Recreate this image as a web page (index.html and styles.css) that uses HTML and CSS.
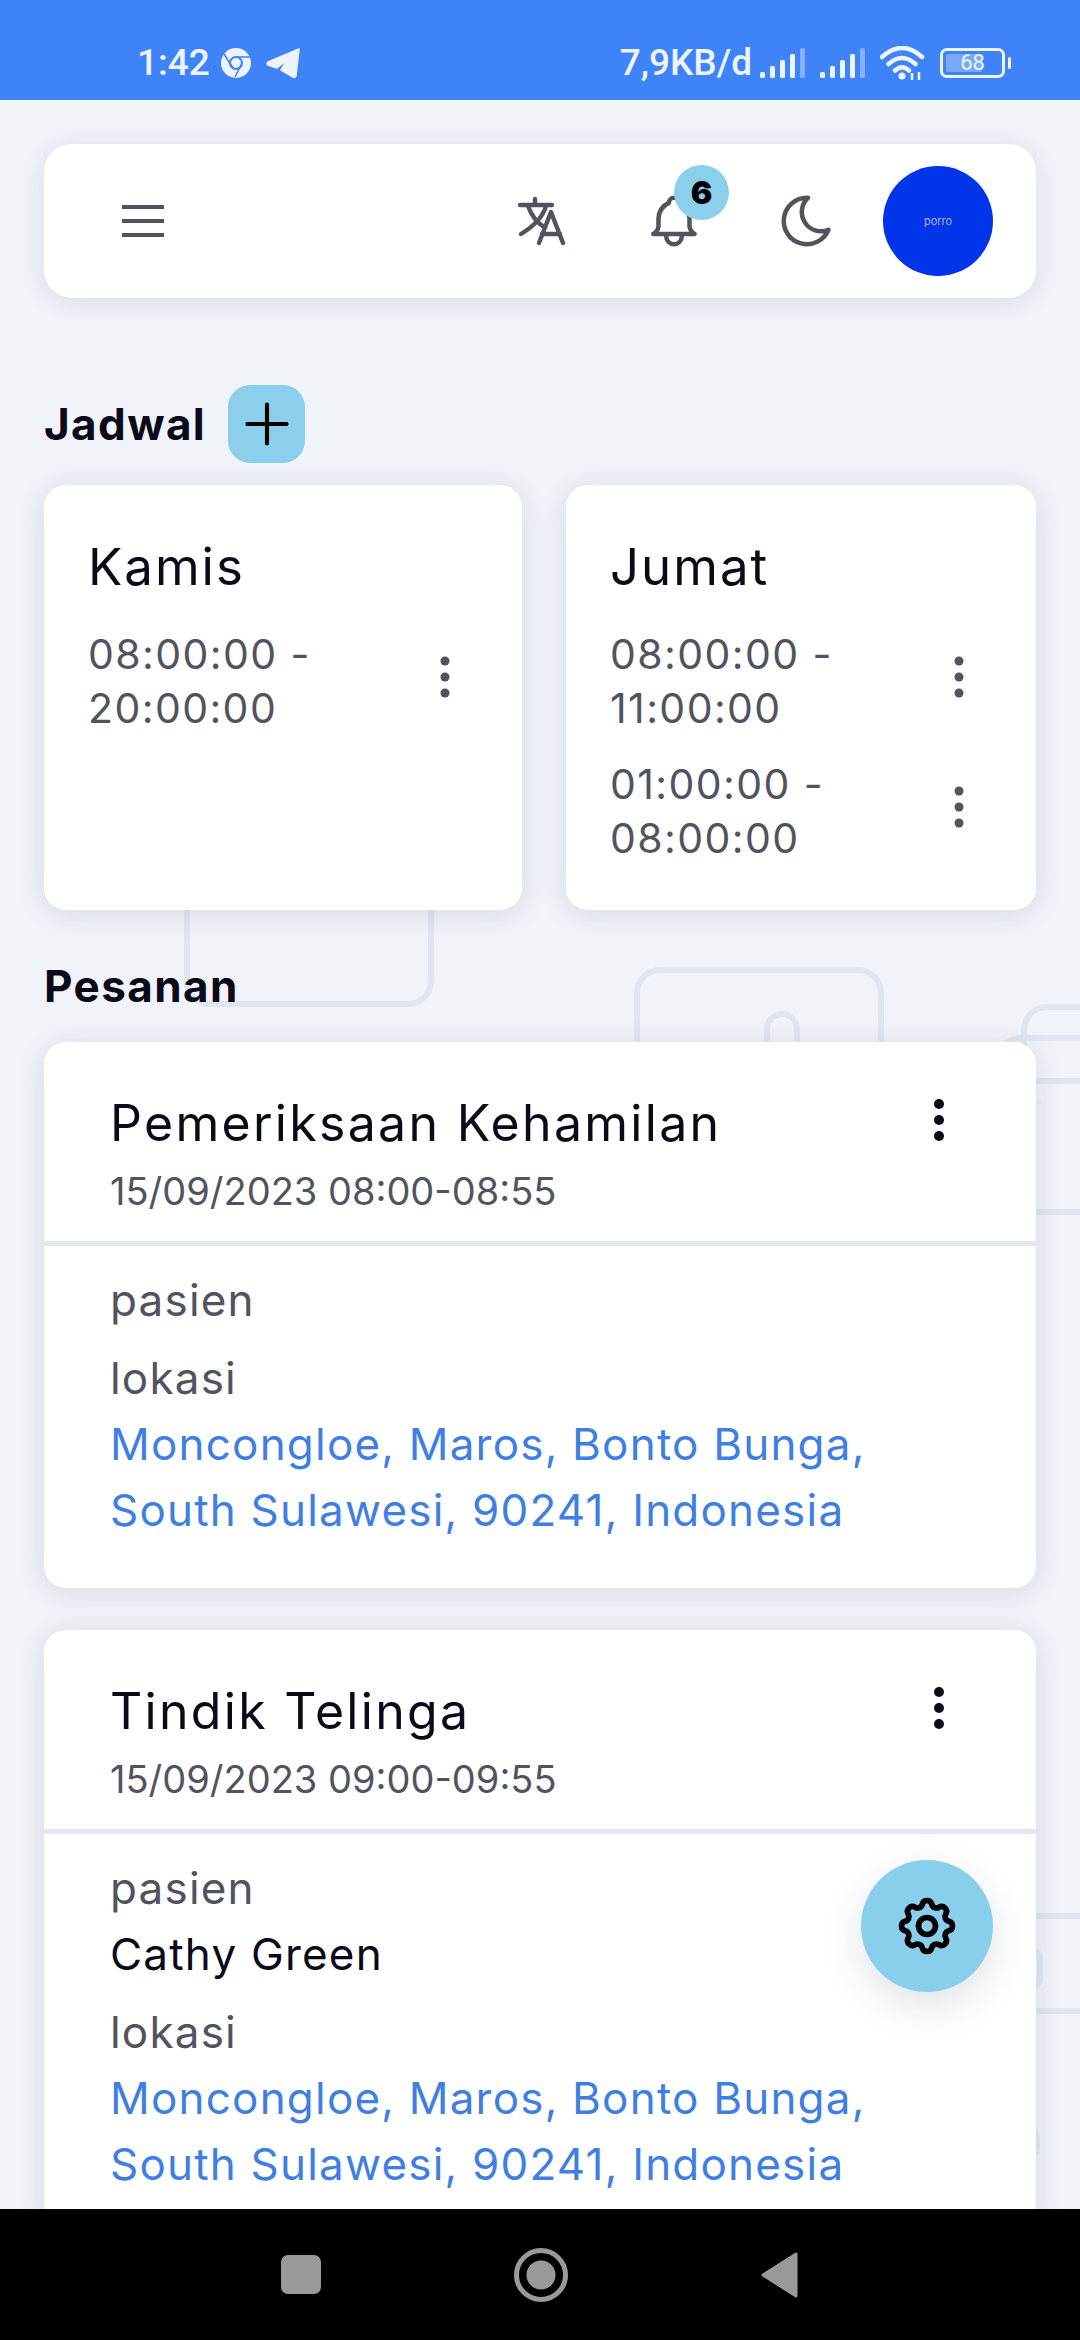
FILE: index.html
```html
<!DOCTYPE html>
<html lang="en">
  <head>
    <meta charset="UTF-8">
    <meta name="viewport" content="width=device-width, initial-scale=1.0">
    <title>Jadwal</title>
    <link rel="stylesheet" href="styles.css">
  </head>
  <body>
    <header class="status-bar">
      <div class="status-left">
        <span class="status-time">1:42</span>
        <svg class="status-icon" viewBox="0 0 30 30" width="30" height="30" aria-hidden="true">
          <circle cx="15" cy="15" r="15" fill="#eef4ff"/>
          <circle cx="15" cy="15" r="6" fill="none" stroke="#3f83f8" stroke-width="2"/>
          <path d="M3 6l9 14M15 9h14M21 15l-7 14" fill="none" stroke="#3f83f8" stroke-width="1.6"/>
        </svg>
        <svg class="status-icon plane" viewBox="0 0 35 30" width="35" height="30" aria-hidden="true">
          <path d="M33 1L2 14q-2 2 0 3l9 3 10-8-6 10 12 7q2 1 3-1z" fill="#eef4ff" stroke="#eef4ff" stroke-width="1.5" stroke-linejoin="round"/>
        </svg>
      </div>
      <div class="status-right">
        <span class="status-speed">7,9KB/d</span>
        <svg class="signal" viewBox="0 0 46 30" width="46" height="30" aria-hidden="true">
          <rect x="0" y="24" width="5" height="6" rx="1.5" fill="#eef4ff"/>
          <rect x="10" y="18" width="5" height="12" rx="1.5" fill="#eef4ff"/>
          <rect x="20" y="12" width="5" height="18" rx="1.5" fill="#eef4ff"/>
          <rect x="30" y="6" width="5" height="24" rx="1.5" fill="#eef4ff"/>
          <rect x="40" y="0" width="5" height="30" rx="1.5" fill="#85b0fa"/>
        </svg>
        <svg class="signal" viewBox="0 0 46 30" width="46" height="30" aria-hidden="true">
          <rect x="0" y="24" width="5" height="6" rx="1.5" fill="#eef4ff"/>
          <rect x="10" y="18" width="5" height="12" rx="1.5" fill="#eef4ff"/>
          <rect x="20" y="12" width="5" height="18" rx="1.5" fill="#eef4ff"/>
          <rect x="30" y="6" width="5" height="24" rx="1.5" fill="#eef4ff"/>
          <rect x="40" y="0" width="5" height="30" rx="1.5" fill="#85b0fa"/>
        </svg>
        <svg class="wifi" viewBox="0 0 46 34" width="46" height="34" aria-hidden="true">
          <path d="M2 11Q22-7 42 11M8.5 18Q22 6 35.5 18M15 24.5Q22 18 29 24.5" fill="none" stroke="#eef4ff" stroke-width="4.5" stroke-linecap="round"/>
          <circle cx="22" cy="30" r="3.5" fill="#eef4ff"/>
          <path d="M32 27v7M39 26v8" stroke="#eef4ff" stroke-width="2.5"/>
        </svg>
        <div class="battery">
          <div class="battery-body">
            <span class="battery-fill"></span>
            <span class="battery-text">68</span>
          </div>
          <span class="battery-nub"></span>
        </div>
      </div>
    </header>

    <main class="page">
      <div class="backdrop">
        <span class="shape shape-a"></span>
        <span class="shape shape-b"></span>
        <span class="shape shape-key"></span>
        <span class="shape shape-c"></span>
        <span class="shape shape-d"></span>
        <span class="shape shape-g"></span>
        <span class="shape shape-e"></span>
        <span class="shape shape-h"></span>
        <span class="shape shape-f"></span>
      </div>

      <nav class="topbar">
        <svg class="menu-icon" viewBox="0 0 42 32" aria-hidden="true"><path d="M0 2h42M0 16h42M0 30h42"/></svg>
        <div class="topbar-actions">
          <svg class="icon translate-icon" viewBox="-8 -7 62 62" aria-hidden="true"><path d="M2 8h32M17 2v6M10 9q5 14 16 21M28 9q-4 15-25 28M21 46l12-31 12 31M24 37h18"/></svg>
          <div class="bell">
            <svg class="icon" viewBox="0 0 24 24" aria-hidden="true"><path d="M10 5a2 2 0 1 1 4 0a7 7 0 0 1 4 6v3a4 4 0 0 0 2 3h-16a4 4 0 0 0 2-3v-3a7 7 0 0 1 4-6M9 17v1a3 3 0 0 0 6 0v-1"/></svg>
            <span class="badge">6</span>
          </div>
          <svg class="icon" viewBox="0 0 24 24" aria-hidden="true"><path d="M12 3c.132 0 .263 0 .393 0a7.5 7.5 0 0 0 7.920 12.446a9 9 0 1 1-8.313-12.454z"/></svg>
          <div class="avatar">porro</div>
        </div>
      </nav>

      <section class="schedule">
        <div class="section-head">
          <h2 class="section-title">Jadwal</h2>
          <button class="add-btn" aria-label="Tambah">
            <svg viewBox="0 0 24 24" width="52" height="52" aria-hidden="true"><path d="M12 3v18M3 12h18"/></svg>
          </button>
        </div>
        <div class="day-grid">
          <article class="day-card">
            <h3 class="day-name">Kamis</h3>
            <div class="slot">
              <p class="slot-time">08:00:00 - 20:00:00</p>
              <svg class="dots" viewBox="0 0 10 42" aria-hidden="true"><circle cx="5" cy="5" r="4.5"/><circle cx="5" cy="21" r="4.5"/><circle cx="5" cy="37" r="4.5"/></svg>
            </div>
          </article>
          <article class="day-card">
            <h3 class="day-name">Jumat</h3>
            <div class="slot">
              <p class="slot-time">08:00:00 - 11:00:00</p>
              <svg class="dots" viewBox="0 0 10 42" aria-hidden="true"><circle cx="5" cy="5" r="4.5"/><circle cx="5" cy="21" r="4.5"/><circle cx="5" cy="37" r="4.5"/></svg>
            </div>
            <div class="slot">
              <p class="slot-time">01:00:00 - 08:00:00</p>
              <svg class="dots" viewBox="0 0 10 42" aria-hidden="true"><circle cx="5" cy="5" r="4.5"/><circle cx="5" cy="21" r="4.5"/><circle cx="5" cy="37" r="4.5"/></svg>
            </div>
          </article>
        </div>
      </section>

      <section class="orders">
        <h2 class="section-title orders-title">Pesanan</h2>

        <article class="order-card">
          <div class="order-head">
            <div>
              <h3 class="order-title">Pemeriksaan Kehamilan</h3>
              <p class="order-date">15/09/2023 08:00-08:55</p>
            </div>
            <svg class="dots dots-dark" viewBox="0 0 10 42" aria-hidden="true"><circle cx="5" cy="5" r="5"/><circle cx="5" cy="21" r="5"/><circle cx="5" cy="37" r="5"/></svg>
          </div>
          <div class="order-body">
            <p class="label">pasien</p>
            <p class="label">lokasi</p>
            <p class="address">Moncongloe, Maros, Bonto Bunga, South Sulawesi, 90241, Indonesia</p>
          </div>
        </article>

        <article class="order-card">
          <div class="order-head">
            <div>
              <h3 class="order-title">Tindik Telinga</h3>
              <p class="order-date">15/09/2023 09:00-09:55</p>
            </div>
            <svg class="dots dots-dark" viewBox="0 0 10 42" aria-hidden="true"><circle cx="5" cy="5" r="5"/><circle cx="5" cy="21" r="5"/><circle cx="5" cy="37" r="5"/></svg>
          </div>
          <div class="order-body">
            <p class="label">pasien</p>
            <p class="value">Cathy Green</p>
            <p class="label">lokasi</p>
            <p class="address">Moncongloe, Maros, Bonto Bunga, South Sulawesi, 90241, Indonesia</p>
          </div>
        </article>
      </section>

      <button class="fab" aria-label="Pengaturan">
        <svg viewBox="0 0 24 24" width="68" height="68" aria-hidden="true"><path d="M10.325 4.317c.426-1.756 2.924-1.756 3.350 0a1.724 1.724 0 0 0 2.573 1.066c1.543-.940 3.310.826 2.370 2.370a1.724 1.724 0 0 0 1.065 2.572c1.756.426 1.756 2.924 0 3.350a1.724 1.724 0 0 0-1.066 2.573c.940 1.543-.826 3.310-2.370 2.370a1.724 1.724 0 0 0-2.572 1.065c-.426 1.756-2.924 1.756-3.350 0a1.724 1.724 0 0 0-2.573-1.066c-1.543.940-3.310-.826-2.370-2.370a1.724 1.724 0 0 0-1.065-2.572c-1.756-.426-1.756-2.924 0-3.350a1.724 1.724 0 0 0 1.066-2.573c-.940-1.543.826-3.310 2.370-2.370c1 .608 2.296.070 2.572-1.065z"/><circle cx="12" cy="12" r="3"/></svg>
      </button>
    </main>

    <footer class="nav-bar">
      <span class="nav-square"></span>
      <span class="nav-circle"></span>
      <svg class="nav-back" viewBox="0 0 38 46" width="38" height="46" aria-hidden="true"><path d="M35 2L2 23l33 21z" fill="#999" stroke="#999" stroke-width="3" stroke-linejoin="round"/></svg>
    </footer>
  </body>
</html>
```

FILE: styles.css
```css
*,
*::after,
*::before {
  box-sizing: border-box;
}

html,
body {
  height: 100%;
}

body {
  display: flex;
  flex-direction: column;
  width: 1080px;
  height: 2340px;
  margin: 0;
  overflow: hidden;
  font-family: Inter, "Liberation Sans", sans-serif;
  font-size: 44px;
  font-weight: 400;
  line-height: 66px;
  letter-spacing: 1.2px;
  background: #f0f3f8;
}

h2,
h3,
p {
  margin: 0;
  font: inherit;
}

button {
  padding: 0;
  border: 0;
  font: inherit;
  color: inherit;
}

/* status bar */

.status-bar {
  display: flex;
  flex: none;
  justify-content: space-between;
  align-items: center;
  height: 100px;
  padding: 26px 69px 0 137px;
  font-family: Roboto, sans-serif;
  font-size: 37px;
  font-weight: 500;
  line-height: 44px;
  letter-spacing: 0;
  color: #eef4ff;
  background: #3f83f8;
}

.status-left,
.status-right {
  display: flex;
  align-items: center;
}

.status-icon {
  margin-left: 11px;
}

.status-icon.plane {
  margin-left: 15px;
}

.signal {
  margin-left: 8px;
}

.signal + .signal {
  margin-left: 14px;
}

.wifi {
  margin-left: 14px;
}

.battery {
  display: flex;
  align-items: center;
  margin-left: 14px;
}

.battery-body {
  position: relative;
  display: flex;
  justify-content: center;
  align-items: center;
  width: 65px;
  height: 30px;
  border: 3px solid #eef4ff;
  border-radius: 7px;
  font-size: 22px;
  font-weight: 400;
  line-height: 1;
}

.battery-fill {
  position: absolute;
  top: 3px;
  bottom: 3px;
  left: 3px;
  width: 36px;
  border-radius: 2px;
  background: #7aa9fa;
}

.battery-text {
  position: relative;
}

.battery-nub {
  width: 3px;
  height: 12px;
  margin-left: 3px;
  border-radius: 2px;
  background: #eef4ff;
}

/* page */

.page {
  position: relative;
  flex: 1;
  min-height: 0;
  padding: 44px 44px 0;
  overflow: hidden;
}

.backdrop {
  position: absolute;
  inset: 0;
}

.shape {
  position: absolute;
  border: 6px solid #e0e6ee;
  border-radius: 26px;
}

.shape-a {
  top: 660px;
  left: 184px;
  width: 250px;
  height: 247px;
}

.shape-b {
  top: 867px;
  left: 634px;
  width: 250px;
  height: 300px;
}

.shape-key {
  top: 911px;
  left: 764px;
  width: 36px;
  height: 120px;
  border-radius: 18px;
}

.shape-c {
  top: 904px;
  left: 1021px;
  width: 120px;
  height: 100px;
  border-bottom: 0;
}

.shape-d {
  top: 935px;
  left: 995px;
  width: 120px;
  height: 60px;
  border-bottom: 0;
}

.shape-g {
  top: 978px;
  left: 960px;
  width: 200px;
  height: 137px;
}

.shape-e {
  top: 1813px;
  left: 960px;
  width: 200px;
  height: 101px;
}

.shape-h {
  top: 1847px;
  left: 990px;
  width: 53px;
  height: 43px;
  border-radius: 12px;
}

.shape-f {
  top: 2027px;
  left: 980px;
  width: 60px;
  height: 33px;
  border-width: 4px;
  border-radius: 12px;
}

.topbar,
.schedule,
.orders {
  position: relative;
}

.topbar {
  display: flex;
  justify-content: space-between;
  align-items: center;
  height: 154px;
  padding: 0 43px 0 78px;
  border-radius: 28px;
  background: #fff;
  box-shadow: 0 4px 26px rgba(40, 60, 90, 0.11);
}

.menu-icon {
  width: 42px;
  height: 32px;
  fill: none;
  stroke: #52535f;
  stroke-width: 4;
}

.icon {
  display: block;
  width: 62px;
  height: 62px;
  fill: none;
  stroke: #52535f;
  stroke-width: 1.75;
  stroke-linecap: round;
  stroke-linejoin: round;
}

.translate-icon {
  stroke-width: 4.4;
}

.topbar-actions {
  display: flex;
  align-items: center;
  gap: 71px;
}

.bell {
  position: relative;
}

.badge {
  position: absolute;
  top: -25px;
  left: 31px;
  width: 55px;
  height: 55px;
  border-radius: 50%;
  font-size: 32px;
  font-weight: 900;
  line-height: 55px;
  letter-spacing: 0;
  text-align: center;
  color: #000;
  background: #8ccfec;
}

.avatar {
  width: 110px;
  height: 110px;
  margin-left: -26px;
  border-radius: 50%;
  font-size: 11px;
  line-height: 110px;
  letter-spacing: 0;
  text-align: center;
  color: #a8b4e8;
  background: #0234ea;
}

/* jadwal */

.schedule {
  margin-top: 87px;
}

.section-head {
  display: flex;
  align-items: center;
  gap: 22px;
  height: 78px;
}

.section-title {
  font-weight: 700;
  letter-spacing: 1.4px;
  color: #0a0a18;
}

.add-btn {
  display: flex;
  justify-content: center;
  align-items: center;
  width: 77px;
  height: 78px;
  border-radius: 22px;
  background: #8ccfec;
}

.add-btn svg {
  fill: none;
  stroke: #000;
  stroke-width: 1.9;
  stroke-linecap: round;
}

.day-grid {
  display: grid;
  grid-template-columns: 478px 1fr;
  gap: 44px;
  margin-top: 22px;
}

.day-card {
  display: flex;
  flex-direction: column;
  height: 425px;
  padding: 52px 44px 0;
  border-radius: 22px;
  background: #fff;
  box-shadow: 0 4px 28px rgba(40, 60, 90, 0.13);
}

.day-name {
  font-size: 51px;
  line-height: 60px;
  letter-spacing: 2px;
  color: #0a0a18;
}

.slot {
  display: flex;
  justify-content: space-between;
  align-items: center;
  margin-bottom: 22px;
}

.day-name + .slot {
  margin-top: 30px;
}

.slot-time {
  width: 270px;
  font-size: 41px;
  line-height: 54px;
  letter-spacing: 1.4px;
  color: #52535f;
}

.dots {
  flex: none;
  width: 10px;
  height: 42px;
  margin-right: 28px;
  margin-bottom: 8px;
  fill: #52535f;
}

/* pesanan */

.orders {
  margin-top: 43px;
}

.orders-title {
  margin-bottom: 23px;
}

.order-card {
  margin-bottom: 42px;
  border-radius: 22px;
  background: #fff;
  box-shadow: 0 4px 28px rgba(40, 60, 90, 0.13);
}

.order-head {
  display: flex;
  justify-content: space-between;
  align-items: flex-start;
  height: 204px;
  padding: 48px 92px 0 66px;
  border-bottom: 5px solid #e2e8f0;
}

.order-title {
  font-size: 50px;
  letter-spacing: 2.3px;
  color: #0a0a18;
}

.order-date {
  margin-top: 8px;
  font-size: 38px;
  line-height: 55px;
  letter-spacing: 0;
  color: #52535f;
}

.dots-dark {
  width: 10px;
  height: 42px;
  margin: 9px 0 0;
  fill: #0a0a18;
}

.order-body {
  padding: 21px 66px 45px;
}

.label {
  color: #52535f;
}

.label + .label,
.value + .label {
  margin-top: 12px;
}

.value {
  color: #0a0a18;
}

.address {
  color: #3f7fe3;
}

.fab {
  position: absolute;
  top: 1760px;
  left: 861px;
  display: flex;
  justify-content: center;
  align-items: center;
  width: 132px;
  height: 132px;
  border-radius: 50%;
  background: #89cfeb;
  box-shadow: 0 14px 40px rgba(30, 50, 90, 0.14);
}

.fab svg {
  fill: none;
  stroke: #000;
  stroke-width: 2;
  stroke-linecap: round;
  stroke-linejoin: round;
}

/* nav bar */

.nav-bar {
  position: relative;
  flex: none;
  display: flex;
  justify-content: center;
  align-items: center;
  gap: 193px;
  height: 131px;
  background: #000;
}

.nav-square {
  width: 40px;
  height: 39px;
  border-radius: 7px;
  background: #999;
}

.nav-circle {
  width: 54px;
  height: 54px;
  border: 5px solid #999;
  border-radius: 50%;
  background: radial-gradient(circle, #999 0 14px, #000 15px);
}
```
